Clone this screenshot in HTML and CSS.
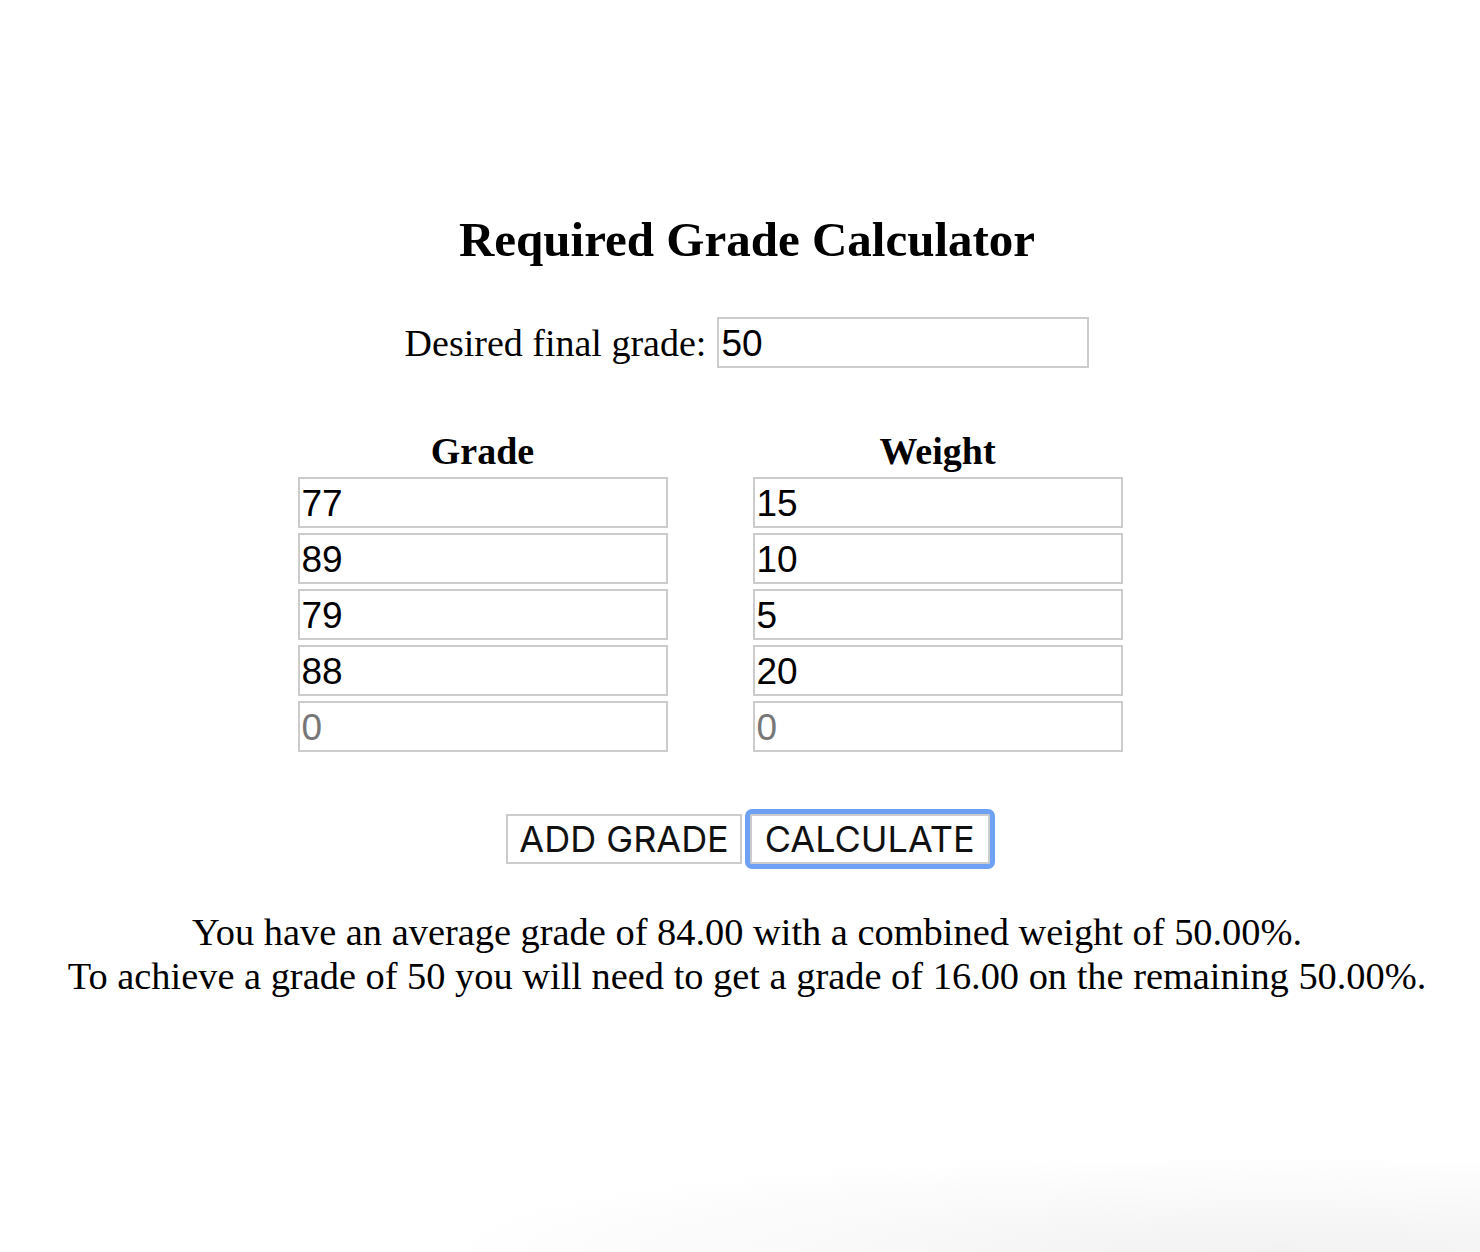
FILE: index.html
```html
<!DOCTYPE html>
<html>
<head>
<meta charset="utf-8">
<title>Required Grade Calculator</title>
<link rel="stylesheet" href="styles.css">
</head>
<body>
<main class="app">
  <h1 class="title">Required Grade Calculator</h1>
  <div class="desired">
    <label class="desired-label" for="desired">Desired final grade:</label>
    <input class="field desired-input" id="desired" type="text" value="50">
  </div>
  <div class="grades">
    <div class="col">
      <div class="col-head">Grade</div>
      <input class="field" type="text" value="77">
      <input class="field" type="text" value="89">
      <input class="field" type="text" value="79">
      <input class="field" type="text" value="88">
      <input class="field" type="text" placeholder="0">
    </div>
    <div class="col">
      <div class="col-head">Weight</div>
      <input class="field" type="text" value="15">
      <input class="field" type="text" value="10">
      <input class="field" type="text" value="5">
      <input class="field" type="text" value="20">
      <input class="field" type="text" placeholder="0">
    </div>
  </div>
  <div class="actions">
    <button class="btn" type="button">ADD GRADE</button>
    <button class="btn btn-focus" type="button">CALCULATE</button>
  </div>
  <div class="result">
    <div>You have an average grade of 84.00 with a combined weight of 50.00%.</div>
    <div>To achieve a grade of 50 you will need to get a grade of 16.00 on the remaining 50.00%.</div>
  </div>
</main>
<div class="shade"></div>
</body>
</html>
```
FILE: styles.css
```css
html, body {
  margin: 0;
  padding: 0;
  background: #ffffff;
}
body {
  font-family: "Liberation Serif", "Times New Roman", serif;
  color: #000;
  height: 1252px;
  overflow: hidden;
  position: relative;
}
.app {
  display: flex;
  flex-direction: column;
  align-items: center;
  padding-top: 212px;
  padding-left: 14px;
}
.title {
  margin: 0;
  font-size: 49px;
  font-weight: bold;
  line-height: 56px;
}
.desired {
  display: flex;
  align-items: center;
  gap: 11px;
  margin-top: 49px;
}
.desired-label {
  font-size: 38px;
}
.field {
  box-sizing: border-box;
  width: 372px;
  height: 51px;
  border: 2px solid #cccccc;
  padding: 2px 2px 0;
  margin: 0;
  font-family: "Liberation Sans", Arial, sans-serif;
  font-size: 37px;
  color: #000;
  background: #fff;
  outline: none;
}
.field::placeholder {
  color: #777;
}
.grades {
  display: flex;
  gap: 85px;
  margin-top: 61px;
  margin-right: 74px;
}
.col {
  display: flex;
  flex-direction: column;
  gap: 5px;
  width: 370px;
}
.col .field {
  width: 370px;
}
.col-head {
  text-align: center;
  font-weight: bold;
  font-size: 38px;
  line-height: 44px;
  margin-bottom: -1px;
}
.actions {
  display: flex;
  align-items: center;
  gap: 8px;
  margin-top: 62px;
  padding-left: 2px;
}
.btn {
  box-sizing: border-box;
  height: 50px;
  border: 2px solid #cccccc;
  background: #fff;
  padding: 0 11px;
  font-family: Inter, "Liberation Sans", sans-serif;
  font-size: 36px;
  color: #111;
  margin: 0;
}
.btn-focus {
  outline: 5px solid #6ea1f4;
  outline-offset: 0;
  border-radius: 2px;
  padding: 0 13px;
}
.result {
  margin-top: 46px;
  text-align: center;
  font-size: 38.4px;
  line-height: 44px;
}
.shade {
  position: absolute;
  left: 380px;
  right: 0;
  bottom: 0;
  height: 100px;
  background: radial-gradient(850px 100px at 900px 100%, #f2f2f2 0%, rgba(255,255,255,0) 100%);
  pointer-events: none;
}
```
